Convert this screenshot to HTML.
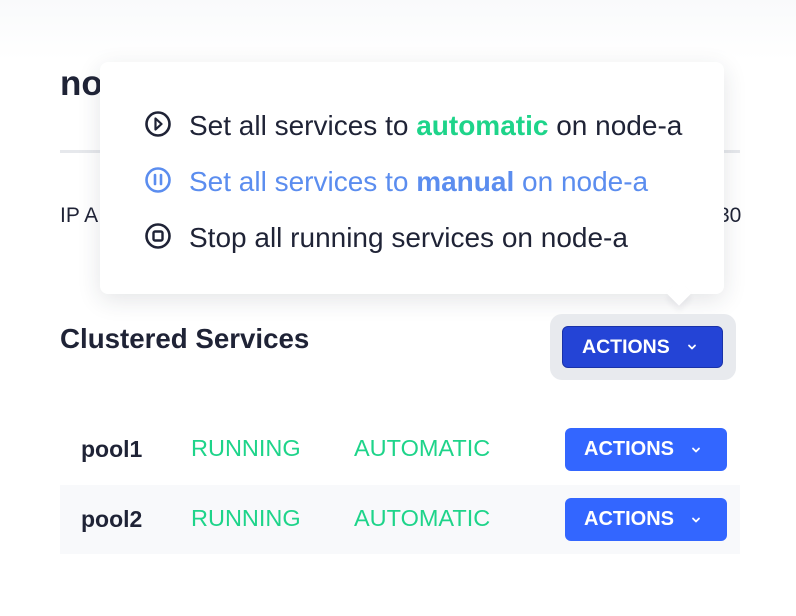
<!DOCTYPE html>
<html><head><style>
*{margin:0;padding:0;box-sizing:border-box}
body{width:796px;height:616px;background:#fff;font-family:"Liberation Sans",sans-serif;color:#1f2336;position:relative;overflow:hidden}
.a{position:absolute}
.btn{position:absolute;background:#3366ff;color:#fff;border-radius:6px;font-weight:bold;font-size:20px;height:43px;width:162px;line-height:43px;padding-left:19px}
.btn svg{position:absolute;left:126px;top:18px}
.g{color:#1ed48a;font-size:23.5px}
.row{position:absolute;left:60px;width:680px;height:69px}
.item{position:absolute;left:145px;font-size:28px;white-space:nowrap}
.item svg{position:absolute;left:0;top:0}
.item div{position:absolute;left:44px;top:3px}
</style></head><body>
<div class="a" style="left:0;top:0;width:796px;height:60px;background:linear-gradient(#f9fafb,#fff)"></div>
<div class="a" style="left:60px;top:64px;font-size:35px;font-weight:bold">no</div>
<div class="a" style="left:192px;top:65px;width:38px;height:3px;background:#1ed48a"></div>
<div class="a" style="left:688px;top:58px;font-size:22px;color:#9ca0a8">×</div>
<div class="a" style="left:60px;top:150px;width:680px;height:3px;background:#e6e8ec"></div>
<div class="a" style="left:60px;top:204px;font-size:21px">IP A</div>
<div class="a" style="left:718px;top:204px;font-size:21px">30</div>

<div class="a" style="left:100px;top:62px;width:624px;height:232px;background:#fff;border-radius:8px;box-shadow:0 6px 24px rgba(30,40,60,.12)"></div>
<div class="a" style="left:670px;top:284px;width:18px;height:18px;background:#fff;transform:rotate(45deg);box-shadow:4px 4px 6px rgba(30,40,60,.06)"></div>

<div class="item" style="top:107px"><svg width="26" height="34" viewBox="0 0 26 34"><circle cx="13" cy="17" r="11.5" fill="none" stroke="#1f2336" stroke-width="2.6"/><path d="M10.5 11.5 L16.5 17 L10.5 22.5 Z" fill="none" stroke="#1f2336" stroke-width="2.2" stroke-linejoin="round"/></svg><div>Set all services to <b style="color:#1ed48a">automatic</b> on node-a</div></div>
<div class="item" style="top:163px;color:#5b8def"><svg width="26" height="34" viewBox="0 0 26 34"><circle cx="13" cy="17" r="11.5" fill="none" stroke="#5b8def" stroke-width="2.6"/><path d="M10 12 V21 M16 12 V21" stroke="#5b8def" stroke-width="2.6" stroke-linecap="round"/></svg><div>Set all services to <b>manual</b> on node-a</div></div>
<div class="item" style="top:219px"><svg width="26" height="34" viewBox="0 0 26 34"><circle cx="13" cy="17" r="11.5" fill="none" stroke="#1f2336" stroke-width="2.6"/><rect x="8.5" y="12.5" width="9" height="9" rx="1.5" fill="none" stroke="#1f2336" stroke-width="2.4"/></svg><div>Stop all running services on node-a</div></div>

<div class="a" style="left:60px;top:323px;font-size:27.7px;font-weight:bold">Clustered Services</div>
<div class="a" style="left:550px;top:314px;width:186px;height:66px;background:#e8eaee;border-radius:12px"></div>
<div class="btn" style="left:562px;top:326px;width:161px;height:42px;line-height:40px;background:#2444d6;border:1px solid #1a32a8;font-size:19.5px">ACTIONS<svg style="left:124px;top:16px" width="10" height="8" viewBox="0 0 10 8"><path d="M2 2.5 L5 5.5 L8 2.5" fill="none" stroke="#fff" stroke-width="1.8" stroke-linecap="round" stroke-linejoin="round"/></svg></div>

<div class="row" style="top:414px"></div>
<div class="row" style="top:485px;background:#f8f9fb"></div>
<div class="a" style="left:81px;top:436px;font-size:23px;font-weight:bold">pool1</div>
<div class="a g" style="left:191px;top:435px">RUNNING</div>
<div class="a g" style="left:354px;top:435px">AUTOMATIC</div>
<div class="btn" style="left:565px;top:428px">ACTIONS<svg width="10" height="8" viewBox="0 0 10 8"><path d="M2 2.5 L5 5.5 L8 2.5" fill="none" stroke="#fff" stroke-width="1.8" stroke-linecap="round" stroke-linejoin="round"/></svg></div>
<div class="a" style="left:81px;top:506px;font-size:23px;font-weight:bold">pool2</div>
<div class="a g" style="left:191px;top:505px">RUNNING</div>
<div class="a g" style="left:354px;top:505px">AUTOMATIC</div>
<div class="btn" style="left:565px;top:498px">ACTIONS<svg width="10" height="8" viewBox="0 0 10 8"><path d="M2 2.5 L5 5.5 L8 2.5" fill="none" stroke="#fff" stroke-width="1.8" stroke-linecap="round" stroke-linejoin="round"/></svg></div>
</body></html>
